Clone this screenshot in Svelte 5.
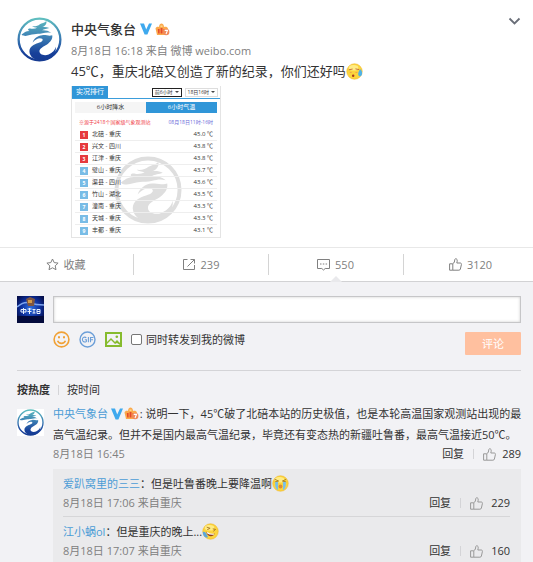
<script lang="ts">
  interface Reply {
    name: string;
    text: string;
    face: 'cry' | 'laugh';
    time: string;
    likes: number;
  }

  const ranking = [
    ['北碚', '重庆', '45.0'],
    ['兴文', '四川', '43.8'],
    ['江津', '重庆', '43.8'],
    ['璧山', '重庆', '43.7'],
    ['渠县', '四川', '43.6'],
    ['竹山', '湖北', '43.5'],
    ['潼南', '重庆', '43.3'],
    ['天城', '重庆', '43.3'],
    ['丰都', '重庆', '43.1'],
  ];

  const replies: Reply[] = [
    { name: '爱趴窝里的三三', text: '但是吐鲁番晚上要降温啊', face: 'cry', time: '8月18日 17:06 来自重庆', likes: 229 },
    { name: '江小蜗ol', text: '但是重庆的晚上...', face: 'laugh', time: '8月18日 17:07 来自重庆', likes: 160 },
  ];

  let draft = $state('');
  let forward = $state(false);
</script>

{#snippet dragon()}
  <path
    d="M14 54C22 48 27 43 38 43C30 39 35 34 43 36C50 37 57 36 62 33C56 32 50 31 46 28C56 29 65 27 70 22C76 18 84 18 90 12C92 21 86 28 77 31C85 30 93 31 99 34C92 37 82 37 77 41C86 40 96 42 105 49C94 46 87 48 78 50C68 53 60 51 53 53C43 53 35 58 26 58C21 58 17 58 14 54Z"
  />
  <path
    d="M48 78C52 66 63 57 77 56C89 54 98 60 108 56C110 66 104 75 96 81C86 89 72 93 69 103C67 115 84 121 97 115C109 110 117 101 119 91C122 112 104 133 77 133C55 134 39 123 38 106C38 91 52 84 65 80C76 77 82 72 77 67C69 62 56 68 48 78Z"
  />
{/snippet}

{#snippet logo(id: string)}
  <svg class="logo" viewBox="0 0 138 138" aria-hidden="true">
    <defs>
      <linearGradient id={id} x1="0" y1="0" x2="0" y2="138" gradientUnits="userSpaceOnUse">
        <stop offset="0" stop-color="#62c3c0" />
        <stop offset="0.45" stop-color="#3c7fb4" />
        <stop offset="0.8" stop-color="#17409a" />
        <stop offset="1" stop-color="#153a90" />
      </linearGradient>
    </defs>
    <circle cx="69" cy="69" r="64" fill="#fff" stroke="url(#{id})" stroke-width="7" />
    <g fill="url(#{id})">{@render dragon()}</g>
  </svg>
{/snippet}

{#snippet badges()}
  <svg class="badge-v" viewBox="0 0 12 12" aria-hidden="true">
    <path d="M0 0.5h4l2.2 6L9 0.5h3L7.4 11.5H4.6z" fill="#3fa9ee" />
  </svg>
  <svg class="badge-crown" viewBox="0 0 15 13" aria-hidden="true">
    <path d="M0.5 5.5C1 3.500 3 3.500 4 4C4 1.500 5.500 0.500 6.500 0.500S9 1.500 9 4c1.500-.6 3.500-.3 4 1.500L12 12H2z" fill="#fba94c" />
    <path d="M5.500 2.500h2v1.500h-2z" fill="#ffd98a" />
    <path d="M2.800 6h1.800v4.500H3.200zM5.600 5h1.900v5.500H5.600zM8.500 6h1.500v4.500H8.500z" fill="#e5482d" />
    <circle cx="11.200" cy="9" r="3.200" fill="#f08a5c" />
    <path d="M9.700 7.400h2.800l-1.500 3.600" fill="none" stroke="#fff" stroke-width="1.100" />
  </svg>
{/snippet}

{#snippet emoji(face: string)}
  <svg class="emoji" viewBox="0 0 18 18" aria-hidden="true">
    <circle cx="9" cy="9" r="8.2" fill="#fcd53c" stroke="#efb52c" stroke-width="0.6" />
    <ellipse cx="8" cy="5" rx="5" ry="3" fill="#ffec85" />
    {#if face === 'sweat'}
      <path d="M3 7.2l4-.8M10 6.2l4 .8" stroke="#c46a3a" stroke-width="1" />
      <circle cx="7.6" cy="13.4" r="1.3" fill="#a83a20" />
      <path d="M15.200 6.500c2.400 2 2.600 6.600-.2 7.600-3-.4-2.600-4.600.2-7.600z" fill="#4fb2e6" />
      <path d="M4 10h2M10 10h2" stroke="#f09a50" stroke-width="1" />
    {:else if face === 'cry'}
      <path d="M3 4.6l4 1.8-4 1M15 4.6l-4 1.8 4 1" fill="none" stroke="#a07a2c" stroke-width="1" />
      <path d="M3.4 7.4h3v8.4c-2-.6-3.4-3-3-8.4zM11.6 7.4h3c.4 5.4-1 7.8-3 8.4z" fill="#79bfe8" />
      <ellipse cx="9" cy="12.2" rx="2" ry="2.2" fill="#e08a34" />
    {:else}
      <path d="M5 4.4l3.6 1.2-3 1.4M11.4 6.2l3 .6-2.4 2" fill="none" stroke="#a8782c" stroke-width="1" />
      <path d="M4 9c3 2.4 6 3 9.4 2.2-1.6 4-7 4.4-9.4-2.2z" fill="#8e3c1c" />
      <path d="M5 10c2.4 1.6 5 2.2 7.6 1.8" stroke="#fff" stroke-width="1.2" fill="none" />
      <path d="M.8 9.6c2.2-1 3.4.6 5.6 5.4-3 1.4-5.4-.8-5.6-5.4z" fill="#5ba6dc" />
    {/if}
  </svg>
{/snippet}

{#snippet thumb()}
  <svg class="thumb" viewBox="0 0 13 13" fill="none" stroke="currentColor" aria-hidden="true">
    <path
      d="M3.8 5.8C5.4 4.8 5.6 3.4 5.7 1.8c.1-1.5 2.4-1.4 2.5.4.1 1-.2 2-.4 2.8h3.3c1.2 0 1.5.8 1.3 1.6l-1 4.4c-.2.8-.7 1.2-1.5 1.2H3.8zM3.8 5.8H.6v6.4h3.2"
      stroke-linejoin="round"
    />
  </svg>
{/snippet}

{#snippet commentActions(likes: number)}
  <span class="comment-actions">
    <button type="button">回复</button>
    <span class="bar"></span>
    <button type="button" class="like">{@render thumb()}{likes}</button>
  </span>
{/snippet}

<main class="page">
  <article class="post">
    <a class="avatar" href="#author" aria-label="中央气象台">{@render logo('logo-post')}</a>
    <div class="post-body">
      <header class="post-head">
        <a class="author" href="#author">中央气象台</a>
        {@render badges()}
        <button type="button" class="more" aria-label="更多">
          <svg width="13" height="9" viewBox="0 0 13 9" fill="none" stroke="#696e78" stroke-width="1.8" aria-hidden="true">
            <path d="M1.5 1.5l5 5 5-5" />
          </svg>
        </button>
      </header>
      <p class="meta">8月18日 16:18 来自 微博 weibo.com</p>
      <p class="post-text">45℃，重庆北碚又创造了新的纪录，你们还好吗{@render emoji('sweat')}</p>

      <figure class="card">
        <div class="card-head">
          <span class="card-title">实况排行</span>
          <span class="card-select card-select--active">前6小时<i></i></span>
          <span class="card-select">18日16时<i></i></span>
        </div>
        <div class="card-tabs">
          <span>6小时降水</span>
          <span class="is-active">6小时气温</span>
        </div>
        <div class="card-note">
          <span>※源于2418个国家级气象观测站</span>
          <span class="card-range">08月18日11时-16时</span>
        </div>
        <svg class="watermark" viewBox="0 0 138 138" aria-hidden="true">
          <circle cx="69" cy="69" r="64" fill="none" stroke="#dedede" stroke-width="8" />
          <g fill="#dedede">{@render dragon()}</g>
        </svg>
        <table>
          <tbody>
            {#each ranking as [city, province, degrees], i}
              <tr>
                <td class="rank"><b class:top={i < 3}>{i + 1}</b></td>
                <td>{city} - {province}</td>
                <td class="degrees">{degrees} ℃</td>
              </tr>
            {/each}
          </tbody>
        </table>
      </figure>
    </div>
  </article>

  <nav class="actions">
    <button type="button">
      <svg width="13" height="13" viewBox="0 0 13 13" fill="none" stroke="currentColor" aria-hidden="true">
        <path d="M6.5 1l1.7 3.6 3.9.5-2.9 2.7.8 3.9-3.5-1.9L3 11.7l.8-3.9L.9 5.1l3.9-.5z" stroke-linejoin="round" />
      </svg>
      收藏
    </button>
    <button type="button">
      <svg width="14" height="13" viewBox="0 0 14 13" fill="none" stroke="currentColor" aria-hidden="true">
        <path d="M5.5 1.5h-4v10h11V7M8.5 1.5h4v4M12.5 1.5l-7 7" />
      </svg>
      239
    </button>
    <button type="button" class="is-open">
      <svg width="13" height="13" viewBox="0 0 13 13" fill="none" stroke="currentColor" aria-hidden="true">
        <path d="M.5 1.5h12v9H8.2L6.5 12l-1.700-1.500H.5z" />
        <path d="M3 6h1.5M5.800 6h1.500M8.600 6h1.500" />
      </svg>
      550
    </button>
    <button type="button">{@render thumb()} 3120</button>
  </nav>

  <section class="comments">
    <form class="composer" onsubmit={(event) => event.preventDefault()}>
      <svg class="me" viewBox="0 0 27 27" aria-hidden="true">
        <defs>
          <radialGradient id="me-glow" cx="0.5" cy="0.45" r="0.6">
            <stop offset="0" stop-color="#2f6fe0" />
            <stop offset="0.6" stop-color="#0d2f9c" />
            <stop offset="1" stop-color="#050f4c" />
          </radialGradient>
        </defs>
        <rect width="27" height="27" fill="url(#me-glow)" />
        <path d="M0 11q7-6 13-4t14 2" stroke="#7fa6ee" stroke-width="1.5" fill="none" />
        <rect y="20" width="27" height="7" fill="#040b3c" />
        <path d="M9 3l4-2 5 2-1 7h-6z" fill="#7e5642" />
        <path d="M11 4h4v3h-4z" fill="#d39a4a" />
        <g stroke="#e8f1ff" fill="none">
          <path d="M4 13.5h5V16H4zM6.500 12v6M10.500 13h4M12.500 12v6M10.500 15.500h4M15.500 13.500h3M17 13.500V17M15.500 17h3M20 13.500h3v4h-3zM20 15.500h3" />
        </g>
      </svg>
      <div class="composer-main">
        <input class="draft" type="text" aria-label="评论内容" bind:value={draft} />
        <div class="tools">
          <button type="button" aria-label="表情">
            <svg width="17" height="17" viewBox="0 0 17 17" fill="none" stroke="#f0a136" stroke-width="1.6" aria-hidden="true">
              <circle cx="8.5" cy="8.5" r="7.400" />
              <path d="M4.600 9.800c1.200 3.400 6.600 3.400 7.800 0" />
              <path d="M6 5.300v2M11 5.300v2" stroke-width="2" />
            </svg>
          </button>
          <button type="button" aria-label="动图">
            <svg width="17" height="17" viewBox="0 0 17 17" fill="none" stroke="#6c9fd8" aria-hidden="true">
              <circle cx="8.5" cy="8.5" r="7.5" stroke-width="1.4" />
              <path d="M7.300 6.900C6 5.500 3.400 6 3.400 8.500s2.800 3.200 4 1.800V8.700H5.800M9.400 6v5.200M11.500 11.200V6.500h3M11.500 8.700h2.500" stroke-width="1.1" />
            </svg>
          </button>
          <button type="button" aria-label="图片">
            <svg width="17" height="15" viewBox="0 0 17 15" fill="none" aria-hidden="true">
              <rect x="1" y="1" width="15" height="13" stroke="#86bb2e" stroke-width="2" />
              <path d="M2 13V10l4-4 4 4 2-2 3 3v2l-3-2-2 1-4-4-4 4z" fill="#86bb2e" />
              <circle cx="11.8" cy="4.8" r="1.3" fill="#86bb2e" />
            </svg>
          </button>
          <label class="forward">
            <input type="checkbox" bind:checked={forward} />
            同时转发到我的微博
          </label>
          <button type="submit" class="submit">评论</button>
        </div>
      </div>
    </form>

    <div class="sort">
      <button type="button" class="is-current">按热度</button>
      <span class="bar"></span>
      <button type="button">按时间</button>
    </div>

    <article class="comment">
      <a class="comment-avatar" href="#author" aria-label="中央气象台">{@render logo('logo-comment')}</a>
      <div class="comment-main">
        <p class="comment-text">
          <a href="#author">中央气象台</a> {@render badges()}: 说明一下，45℃破了北碚本站的历史极值，也是本轮高温国家观测站出现的最<br
          />高气温纪录。但并不是国内最高气温纪录，毕竟还有变态热的新疆吐鲁番，最高气温接近50℃。
        </p>
        <div class="comment-foot">
          <span>8月18日 16:45</span>
          {@render commentActions(289)}
        </div>

        <ul class="replies">
          {#each replies as reply}
            <li>
              <p class="reply-text">
                <a href="#user">{reply.name}</a>：{reply.text}{@render emoji(reply.face)}
              </p>
              <div class="comment-foot">
                <span>{reply.time}</span>
                {@render commentActions(reply.likes)}
              </div>
            </li>
          {/each}
        </ul>
      </div>
    </article>
  </section>
</main>

<style>
  :global(body) {
    margin: 0;
    background: #f2f2f5;
  }

  .page {
    overflow: hidden;
    background: #fff;
    color: #333;
    font-family: 'Open Sans', 'Noto Sans CJK SC', sans-serif;
    font-size: 11px;
    line-height: 20px;
  }

  p,
  ul,
  figure {
    margin: 0;
    padding: 0;
  }

  a {
    color: #4a9cd6;
    text-decoration: none;
  }

  button {
    padding: 0;
    border: none;
    background: none;
    color: inherit;
    font: inherit;
    cursor: pointer;
  }

  svg {
    flex-shrink: 0;
  }

  .logo {
    display: block;
    width: 100%;
  }

  .post {
    display: flex;
    gap: 9px;
    padding: 17px 12px 9px 17px;
  }

  .avatar {
    flex: none;
    width: 45px;
    height: 45px;
  }

  .post-body {
    flex: 1;
    min-width: 0;
  }

  .post-head {
    display: flex;
    align-items: center;
    height: 24px;
  }

  .author {
    margin-right: 4px;
    color: #333;
    font-size: 13px;
    font-weight: 500;
  }

  .badge-v {
    width: 12px;
    height: 12px;
    margin-right: 3px;
  }

  .badge-crown {
    width: 15px;
    height: 13px;
  }

  .more {
    align-self: flex-start;
    display: flex;
    margin-left: auto;
  }

  .meta {
    color: #808080;
    line-height: 20px;
  }

  .post-text {
    font-size: 13px;
    line-height: 20px;
    white-space: nowrap;
  }

  .emoji {
    width: 17px;
    height: 17px;
    vertical-align: -4px;
  }

  .card {
    position: relative;
    box-sizing: border-box;
    width: 150px;
    margin-top: 5px;
    border: 1px solid #e4e4e4;
    border-top: none;
    font-size: 6px;
    line-height: 12px;
    white-space: nowrap;
  }

  .card-head {
    display: flex;
    align-items: center;
    gap: 3px;
    padding-right: 2px;
    border-bottom: 1px solid #3b9ddb;
  }

  .card-title {
    margin-right: auto;
    padding: 0 4px;
    background: #3096d8;
    color: #fff;
    font-size: 7px;
  }

  .card-select {
    display: flex;
    align-items: center;
    gap: 2px;
    padding: 0 2px;
    border: 1px solid #ddd;
    font-size: 5px;
    line-height: 7px;
  }

  .card-select--active {
    border-color: #222;
  }

  .card-select i {
    border: 2px solid transparent;
    border-top-color: #444;
    border-bottom: none;
  }

  .card-tabs {
    display: flex;
    margin: 3px 3px 0;
    text-align: center;
  }

  .card-tabs span {
    flex: 1;
    background: #f5f5f5;
    line-height: 11px;
  }

  .card-tabs .is-active {
    background: #3096d8;
    color: #fff;
  }

  .card-note {
    display: flex;
    justify-content: space-between;
    padding: 3px 7px 1px;
    color: #f0444c;
    font-size: 5px;
  }

  .card-range {
    color: #6868d8;
  }

  .watermark {
    position: absolute;
    top: 70px;
    left: 42px;
    width: 68px;
  }

  table {
    position: relative;
    width: 142px;
    margin: 0 3px;
    border-spacing: 0;
  }

  td {
    box-sizing: border-box;
    height: 12px;
    padding: 0;
    border-bottom: 1px solid #eee;
    line-height: 11px;
  }

  tr:last-child td {
    border-color: transparent;
  }

  td.rank {
    width: 17px;
    padding-left: 5px;
  }

  .rank b {
    display: block;
    width: 8px;
    background: #78bce6;
    color: #fff;
    font-size: 5px;
    line-height: 8px;
    text-align: center;
  }

  .rank .top {
    background: #e63a3e;
  }

  .degrees {
    padding-right: 4px;
    text-align: right;
  }

  .actions {
    display: grid;
    grid-template-columns: repeat(4, 1fr);
    margin: 0 -5px 0 -2px;
    border-top: 1px solid #e8e8e8;
    border-bottom: 1px solid #d2d2d4;
    color: #808080;
  }

  .actions button {
    position: relative;
    display: flex;
    align-items: center;
    justify-content: center;
    gap: 5px;
    height: 33px;
  }

  .actions button + button::before {
    content: '';
    position: absolute;
    top: 6px;
    left: 0;
    height: 21px;
    border-left: 1px solid #d4d4d4;
  }

  .actions .is-open::after {
    content: '';
    position: absolute;
    bottom: -1px;
    left: 50%;
    margin-left: -6px;
    border: 6px solid transparent;
    border-top: none;
    border-bottom-color: #e9e9ec;
  }

  .thumb {
    width: 13px;
    height: 13px;
  }

  .comments {
    padding: 14px 12px 0 17px;
    background: #f2f2f5;
  }

  .composer {
    display: flex;
    gap: 9px;
    padding-bottom: 15px;
    border-bottom: 1px solid #d4d4d7;
  }

  .me {
    width: 27px;
    height: 27px;
  }

  .composer-main {
    flex: 1;
  }

  .draft {
    display: block;
    box-sizing: border-box;
    width: 100%;
    height: 27px;
    padding: 0 6px;
    border: 1px solid #c6c6c8;
    background: #fff;
    box-shadow: inset 0 0 3px #ccc;
    font: inherit;
  }

  .tools {
    display: flex;
    align-items: flex-start;
    gap: 9px;
    padding-top: 8px;
  }

  .tools button {
    display: flex;
    align-items: center;
    height: 17px;
  }

  .forward {
    display: flex;
    align-items: center;
    gap: 4px;
    line-height: 17px;
  }

  .forward input {
    appearance: none;
    box-sizing: border-box;
    width: 11px;
    height: 11px;
    margin: 0;
    border: 1px solid #767676;
    border-radius: 2px;
    background: #fff;
  }

  .forward input:checked {
    background: #4a9cd6;
  }

  .tools .submit {
    justify-content: center;
    width: 56px;
    height: 23px;
    margin: 1px 0 0 auto;
    border-radius: 1px;
    background: #ffc09f;
    color: #fff;
  }

  .bar {
    height: 10px;
    border-left: 1px solid #d4d4d7;
  }

  .sort {
    display: flex;
    align-items: center;
    gap: 8px;
    padding: 9px 0;
  }

  .is-current {
    font-weight: 700;
  }

  .comment {
    display: flex;
    gap: 9px;
  }

  .comment-avatar {
    flex: none;
    width: 27px;
    height: 27px;
    background: #fff;
  }

  .comment-main {
    flex: 1;
    min-width: 0;
  }

  .comment-text {
    line-height: 21px;
    margin-top: -6px;
    white-space: nowrap;
  }

  .comment-text .badge-v,
  .comment-text .badge-crown {
    margin-right: 1px;
    vertical-align: -2px;
  }

  .comment-foot {
    display: flex;
    justify-content: space-between;
    color: #808080;
    line-height: 18px;
  }

  .comment-actions {
    display: flex;
    align-items: center;
    gap: 9px;
    color: #333;
  }

  .like {
    display: flex;
    align-items: center;
    gap: 6px;
  }

  .like .thumb {
    color: #999;
  }

  .replies {
    margin-top: 6px;
    padding: 4px 11px 0 10px;
    background: #eaeaec;
    list-style: none;
  }

  .replies li {
    padding-bottom: 4px;
  }

  .replies .like {
    gap: 8px;
  }

  .replies li + li {
    padding-top: 4px;
    border-top: 1px solid #d6d6d8;
  }

  .reply-text {
    line-height: 21px;
  }
</style>
